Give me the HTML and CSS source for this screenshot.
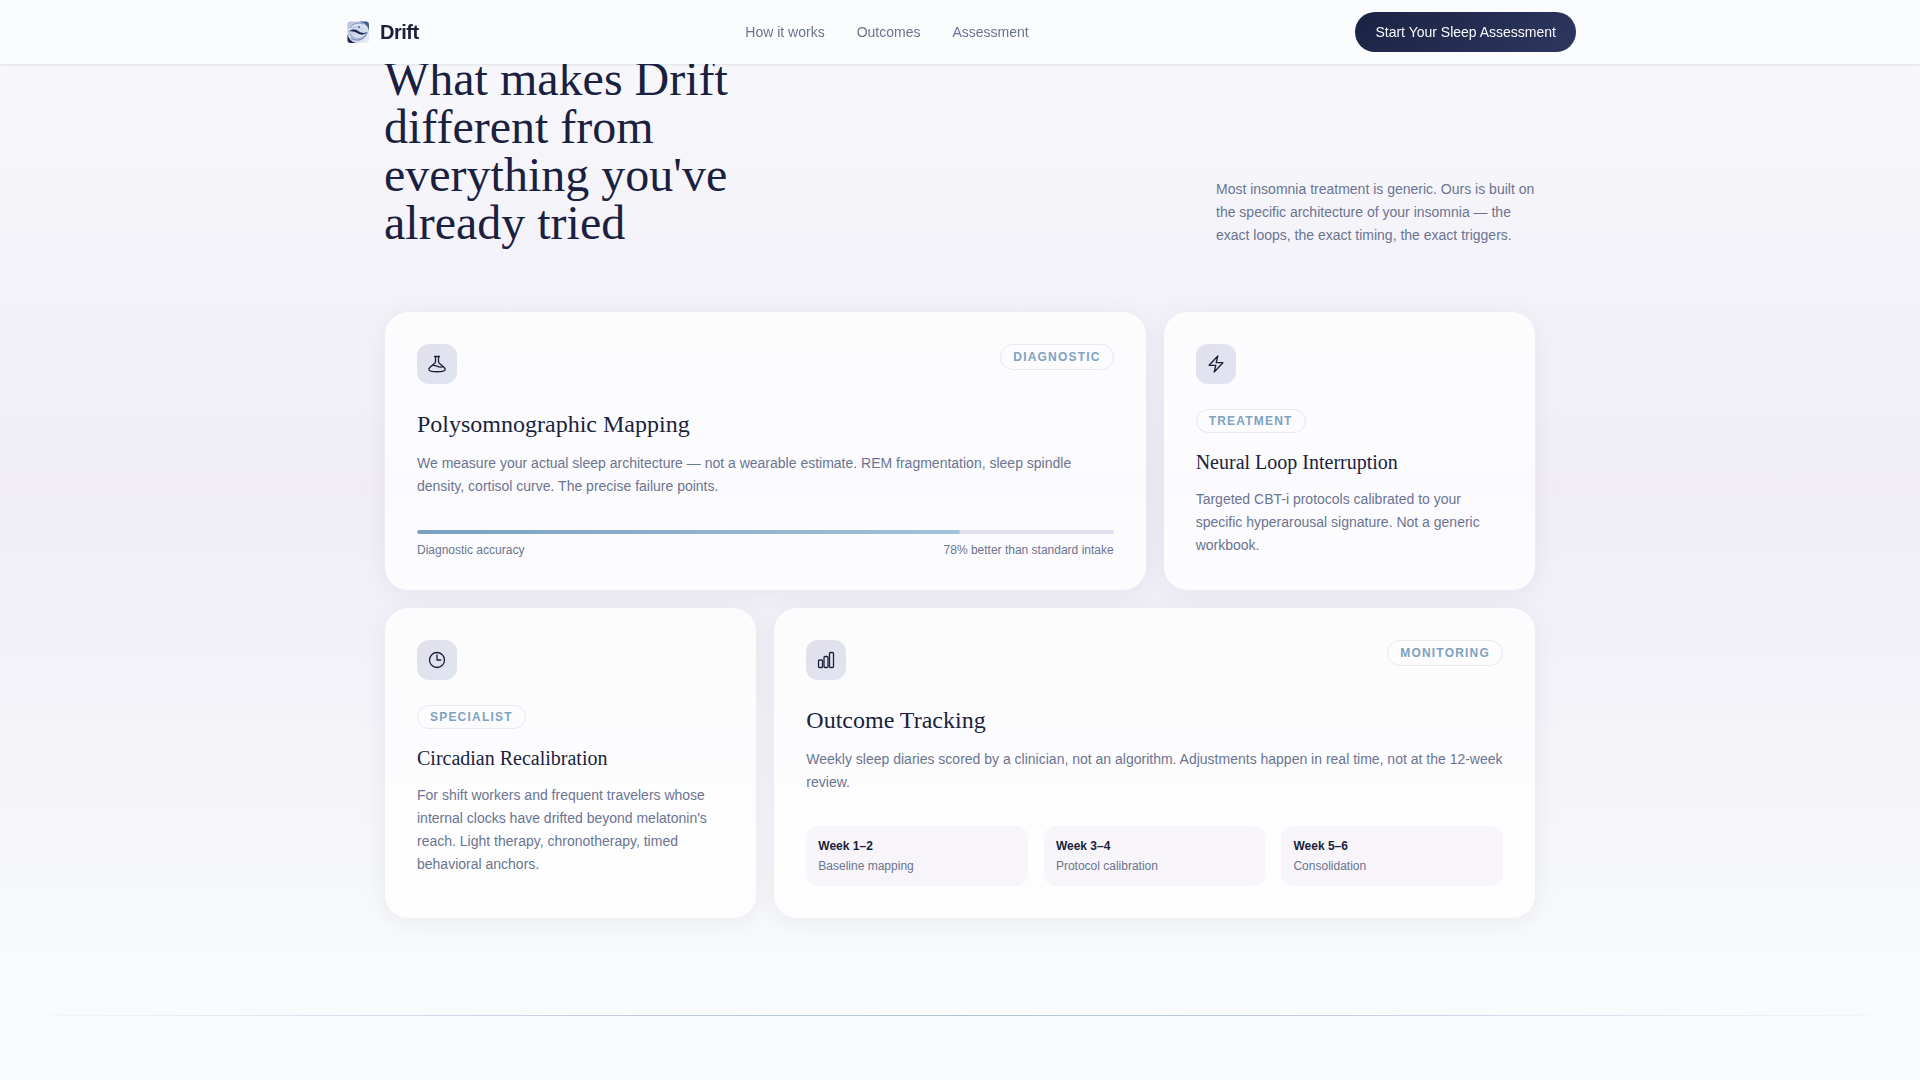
FILE: index.html
```html
<!DOCTYPE html>
<html lang="en">
  <head>
    <meta charset="UTF-8" />
    <meta name="viewport" content="width=device-width, initial-scale=1.0" />
    <title>Drift</title>
    <link rel="stylesheet" href="styles.css">
  </head>
  <body>
    <header class="site-header">
      <div class="header-inner">
        <a class="brand" href="#">
          <svg class="brand-logo" viewBox="0 0 28 28" aria-hidden="true">
            <defs>
              <linearGradient id="logoBg" x1="0" y1="0" x2="1" y2="1">
                <stop offset="0" stop-color="#b3c0dc" />
                <stop offset="1" stop-color="#eceffa" />
              </linearGradient>
            </defs>
            <rect x="3.500" y="3.500" width="21.500" height="21.500" rx="3" fill="url(#logoBg)" />
            <path d="M15 3.500h7a3 3 0 0 1 3 3V13c-1-5-4-8-10-9.500z" fill="#46618f" />
            <path d="M3.500 16c1 5 4 8 9 9h-6a3 3 0 0 1-3-3z" fill="#1c2847" />
            <path d="M5 12C8 6 17 5 22 10" fill="none" stroke="#dfe6f5" stroke-width="1.400" />
            <path d="M6 10c3-5 9-6 13-4" fill="none" stroke="#7f92bb" stroke-width="1" />
            <path d="M7 20c5 4 14 2 16-6" fill="none" stroke="#7f92bb" stroke-width="1.400" />
            <path d="M6 16c3 6 12 6 16 0" fill="none" stroke="#a0b0d3" stroke-width="1.200" />
            <path d="M5 13.500c4-3 7-2 10 0 3 1.700 5 2 8 .5-3 3.200-6 3.200-9 1.500-3-2-6-2.500-9-2z" fill="#1c2847" />
            <circle cx="15" cy="9" r="1" fill="#46618f" />
          </svg>
          <span>Drift</span>
        </a>
        <nav class="main-nav">
          <a href="#how">How it works</a>
          <a href="#outcomes">Outcomes</a>
          <a href="#assessment">Assessment</a>
        </nav>
        <button class="cta" type="button">Start Your Sleep Assessment</button>
      </div>
    </header>

    <main>
      <section class="features" id="how">
        <div class="container">
          <div class="section-head">
            <h2>What makes Drift different from everything you've already tried</h2>
            <p>Most insomnia treatment is generic. Ours is built on the specific architecture of your insomnia — the exact loops, the exact timing, the exact triggers.</p>
          </div>

          <div class="bento">
            <article class="card wide">
              <div class="card-top">
                <div class="icon-box">
                  <svg class="icon" viewBox="0 0 20 20" aria-hidden="true">
                    <path d="M7.500 2.500h5M8.500 2.500v5.300c0 .6-.3 1-.8 1.400L3 13.200c-2.400 2.300-.9 3.700 1.500 4.100 3.700.6 7.300.6 11 0 2.400-.4 3.900-1.800 1.500-4.100L12.300 9.200c-.5-.4-.8-.8-.8-1.400V2.500M4.800 11.700c1.800-.6 3.600-.3 5.200.5 1.700.8 3.900 1.300 6.200.5" />
                  </svg>
                </div>
                <span class="badge">Diagnostic</span>
              </div>
              <h3>Polysomnographic Mapping</h3>
              <p>We measure your actual sleep architecture — not a wearable estimate. REM fragmentation, sleep spindle density, cortisol curve. The precise failure points.</p>
              <div class="meter">
                <div class="meter-track">
                  <div class="meter-fill" style="width: 78%"></div>
                </div>
                <div class="meter-labels">
                  <span>Diagnostic accuracy</span>
                  <span>78% better than standard intake</span>
                </div>
              </div>
            </article>

            <article class="card">
              <div class="icon-box">
                <svg class="icon" viewBox="0 0 20 20" aria-hidden="true">
                  <path d="M3.100 11.300 11.800 2l-1.600 6.700h6.700L8.200 18l1.600-6.700z" />
                </svg>
              </div>
              <div class="badge-row"><span class="badge">Treatment</span></div>
              <h3>Neural Loop Interruption</h3>
              <p>Targeted CBT-i protocols calibrated to your specific hyperarousal signature. Not a generic workbook.</p>
            </article>

            <article class="card">
              <div class="icon-box">
                <svg class="icon" viewBox="0 0 20 20" aria-hidden="true">
                  <circle cx="10" cy="10" r="7.500" />
                  <path d="M10 5v5h3.750" />
                </svg>
              </div>
              <div class="badge-row"><span class="badge">Specialist</span></div>
              <h3>Circadian Recalibration</h3>
              <p>For shift workers and frequent travelers whose internal clocks have drifted beyond melatonin's reach. Light therapy, chronotherapy, timed behavioral anchors.</p>
            </article>

            <article class="card wide" id="outcomes">
              <div class="card-top">
                <div class="icon-box">
                  <svg class="icon" viewBox="0 0 20 20" aria-hidden="true">
                    <rect x="2.500" y="10" width="4" height="7.500" rx="1" />
                    <rect x="8" y="6.500" width="4" height="11" rx="1" />
                    <rect x="13.500" y="2.500" width="4" height="15" rx="1" />
                  </svg>
                </div>
                <span class="badge">Monitoring</span>
              </div>
              <h3>Outcome Tracking</h3>
              <p>Weekly sleep diaries scored by a clinician, not an algorithm. Adjustments happen in real time, not at the 12-week review.</p>
              <div class="weeks">
                <div class="week">
                  <strong>Week 1–2</strong>
                  <span>Baseline mapping</span>
                </div>
                <div class="week">
                  <strong>Week 3–4</strong>
                  <span>Protocol calibration</span>
                </div>
                <div class="week">
                  <strong>Week 5–6</strong>
                  <span>Consolidation</span>
                </div>
              </div>
            </article>
          </div>
        </div>
      </section>

      <hr class="divider">
    </main>
  </body>
</html>
```

FILE: styles.css
```css
/* General styles */
* {
  box-sizing: border-box;
}
body {
  margin: 0;
  font-family: "Liberation Sans", Arial, sans-serif;
  font-size: 16px;
  line-height: 24px;
  color: #1a1f3c;
  background-color: #f8fafc;
}
h2,
h3,
p {
  margin: 0;
}
h2,
h3 {
  font-family: "Liberation Serif", "Times New Roman", serif;
  font-weight: 400;
}
p {
  font-size: 14px;
  line-height: 23px;
  color: #6b7490;
}
a {
  color: inherit;
  text-decoration: none;
}

/* Header */
.site-header {
  position: fixed;
  top: 0;
  left: 0;
  right: 0;
  z-index: 10;
  background-color: #fafcfe;
  box-shadow: 0 1px 3px rgba(26, 31, 60, 0.1);
}
.header-inner {
  max-width: 1280px;
  height: 64px;
  margin: 0 auto;
  padding: 0 24px;
  display: flex;
  align-items: center;
  justify-content: space-between;
}
.brand {
  display: flex;
  align-items: center;
  gap: 8px;
  font-size: 20px;
  font-weight: 700;
  letter-spacing: -0.5px;
}
.brand-logo {
  width: 28px;
  height: 28px;
}
.main-nav {
  display: flex;
  gap: 32px;
  font-size: 14px;
  color: #6b7490;
}
.cta {
  height: 40px;
  padding: 0 20px;
  border: none;
  border-radius: 20px;
  font-family: inherit;
  font-size: 14px;
  color: #f8fafc;
  background: linear-gradient(135deg, #1b2344, #2d365e);
  cursor: pointer;
}

/* Features */
.features {
  padding: 55px 24px 96px;
  background: linear-gradient(180deg, #f8f9fc 0%, #f0edf6 48%, #f8fafc 96%);
}
.container {
  max-width: 1152px;
  margin: 0 auto;
}
.section-head {
  display: flex;
  align-items: flex-end;
  justify-content: space-between;
  margin-bottom: 64px;
}
.section-head h2 {
  max-width: 384px;
  font-size: 48px;
  line-height: 48px;
  color: #1a2140;
}
.section-head p {
  max-width: 320px;
}

/* Card grid */
.bento {
  display: grid;
  grid-template-columns: repeat(3, 1fr);
  gap: 16px;
}
.card {
  padding: 32px;
  border: 1px solid rgba(232, 228, 240, 0.4);
  border-radius: 24px;
  background-color: rgba(255, 255, 255, 0.75);
  background-clip: padding-box;
  box-shadow: 0 4px 24px rgba(26, 31, 60, 0.06);
}
.wide {
  grid-column: span 2;
}
.card-top {
  display: flex;
  align-items: flex-start;
  justify-content: space-between;
}
.icon-box {
  width: 40px;
  height: 40px;
  display: flex;
  align-items: center;
  justify-content: center;
  border-radius: 12px;
  background: linear-gradient(135deg, #e2e0ec, #dfe5f1);
}
.icon {
  width: 20px;
  height: 20px;
  fill: none;
  stroke: #1a1f3c;
  stroke-width: 1.3;
  stroke-linecap: round;
  stroke-linejoin: round;
}
.badge {
  padding: 4px 12px;
  border: 1px solid #e6e9f1;
  border-radius: 16px;
  font-size: 12px;
  line-height: 16px;
  font-weight: 700;
  letter-spacing: 0.1em;
  text-transform: uppercase;
  color: #7ea2c2;
}
.badge-row {
  margin: 24px 0 16px;
}
.card h3 {
  margin-bottom: 12px;
  font-size: 20px;
  line-height: 28px;
}
.wide h3 {
  margin-top: 24px;
  font-size: 24px;
  line-height: 32px;
}

/* Accuracy meter */
.meter {
  margin-top: 32px;
}
.meter-track {
  height: 4px;
  border-radius: 2px;
  background-color: #e2dfec;
  overflow: hidden;
}
.meter-fill {
  height: 100%;
  border-radius: 2px;
  background: linear-gradient(90deg, #7a9fc2, #a3c2da);
}
.meter-labels {
  display: flex;
  justify-content: space-between;
  margin-top: 8px;
  font-size: 12px;
  line-height: 16px;
  color: #6b7490;
}

/* Week tiles */
.weeks {
  display: grid;
  grid-template-columns: repeat(3, 1fr);
  gap: 16px;
  margin-top: 32px;
}
.week {
  display: flex;
  flex-direction: column;
  gap: 4px;
  padding: 12px;
  border-radius: 12px;
  font-size: 12px;
  line-height: 16px;
  background-color: #f7f5fa;
}
.week span {
  color: #6b7490;
}

/* Divider between sections */
.divider {
  height: 1px;
  margin: 0 0 64px;
  border: none;
  background: linear-gradient(90deg, transparent, #c9cde2 30%, #a9c4da 50%, #c9cde2 70%, transparent);
}
```
